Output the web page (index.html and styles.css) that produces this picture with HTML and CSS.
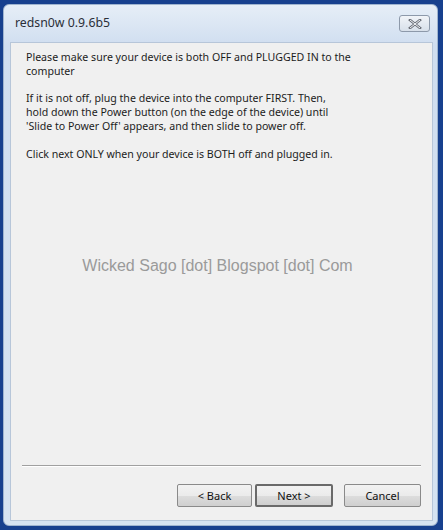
FILE: index.html
```html
<!DOCTYPE html>
<html>
<head>
<meta charset="utf-8">
<link rel="stylesheet" href="styles.css">
</head>
<body>
<div class="window">
  <div class="titlebar">
    <span class="title">redsn0w 0.9.6b5</span>
    <span class="close">
      <svg width="14" height="10" viewBox="0 0 14 10"><path d="M2 1 L12 9 M12 1 L2 9" stroke="#6b6f78" stroke-width="2.6" stroke-linecap="square"/><path d="M2 1 L12 9 M12 1 L2 9" stroke="#f4f6f8" stroke-width="1" /></svg>
    </span>
  </div>
  <div class="client">
    <div class="message">
      <p>Please make sure your device is both OFF and PLUGGED IN to the<br>computer</p>
      <p>If it is not off, plug the device into the computer FIRST. Then,<br>hold down the Power button (on the edge of the device) until<br>'Slide to Power Off' appears, and then slide to power off.</p>
      <p>Click next ONLY when your device is BOTH off and plugged in.</p>
    </div>
    <div class="watermark">Wicked Sago [dot] Blogspot [dot] Com</div>
    <div class="separator"></div>
    <div class="buttons">
      <button class="btn">&lt; Back</button>
      <button class="btn default">Next &gt;</button>
      <button class="btn cancel">Cancel</button>
    </div>
  </div>
</div>
</body>
</html>
```
FILE: styles.css
```css
html, body {
  margin: 0;
  padding: 0;
}
body {
  width: 443px;
  height: 530px;
  background: #17408e;
  font-family: "Noto Sans", "DejaVu Sans", sans-serif;
  overflow: hidden;
}
.window {
  box-sizing: border-box;
  margin: 4px 5px 0 3px;
  height: 522px;
  border-radius: 6px;
  background: linear-gradient(#e6eef7, #d0def0 40px, #d6e3f1);
  border: 1px solid #9fb4cf;
  display: flex;
  flex-direction: column;
  padding: 0 4px 4px 6px;
}
.titlebar {
  height: 37px;
  display: flex;
  align-items: center;
  justify-content: space-between;
  padding: 0 3px 2px 5px;
  box-sizing: border-box;
}
.title {
  font-size: 12.3px;
  color: #2a2f38;
}
.close {
  width: 31px;
  height: 17px;
  box-sizing: border-box;
  border: 1px solid #8d99aa;
  border-radius: 3px;
  background: linear-gradient(#f1f4f8, #d8e0ea);
  display: flex;
  align-items: center;
  justify-content: center;
  margin-top: 2px;
}
.client {
  flex: 1;
  background: #f0f0f0;
  border: 1px solid #b7c6d9;
  display: flex;
  flex-direction: column;
  padding: 0 11px 0 11px;
}
.message {
  padding-top: 8px;
  font-size: 10.6px;
  line-height: 13.8px;
  color: #1c1c1c;
}
.message p {
  margin: 0 0 13.8px 4px;
}
.watermark {
  margin-top: 82px;
  font-family: "Liberation Sans", Arial, sans-serif;
  font-size: 16px;
  color: #9a9a9a;
  text-align: center;
  padding-right: 8px;
}
.separator {
  margin-top: auto;
  height: 1px;
  background: #a0a0a0;
  border-bottom: 1px solid #ffffff;
}
.buttons {
  display: flex;
  justify-content: flex-end;
  padding: 17px 0 13px 0;
}
.btn {
  width: 75px;
  height: 23px;
  box-sizing: border-box;
  font-family: "Noto Sans", "DejaVu Sans", sans-serif;
  font-size: 11px;
  color: #111;
  border: 1px solid #8a8a8a;
  border-radius: 2px;
  background: linear-gradient(#f2f2f2 0%, #ebebeb 50%, #dddddd 51%, #cfcfcf 100%);
  padding: 0;
  margin-left: 3px;
}
.btn.default {
  width: 78px;
  border: 2px solid #6a6a6a;
}
.btn.cancel {
  margin-left: 11px;
  width: 77px;
}
```
